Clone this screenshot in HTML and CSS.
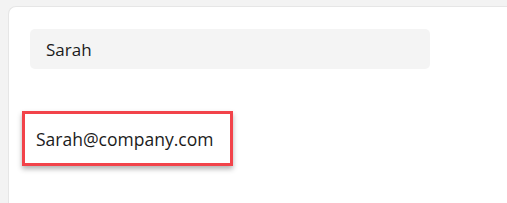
FILE: index.html
```html
<!DOCTYPE html>
<html>
<head>
    <meta charset="utf-8">
    <title>Contact form</title>
    <link rel="stylesheet" href="styles.css">
</head>
<body>
    <div class="panel">
        <div class="field-input">Sarah</div>
        <div class="highlight">
            <span class="email">Sarah@company.com</span>
        </div>
    </div>
</body>
</html>
```

FILE: styles.css
```css
body {
    margin: 0;
    background: #f3f3f3;
    font-family: "Open Sans", "Noto Sans", sans-serif;
    color: #1b1b1b;
    overflow: hidden;
    height: 203px;
}
.panel {
    margin: 6px 0 0 8px;
    background: #ffffff;
    border: 1px solid #e6e6e6;
    border-right: none;
    border-bottom: none;
    border-top-left-radius: 8px;
    padding: 22px 0 0 21px;
    height: 174px;
}
.field-input {
    width: 384px;
    height: 40px;
    padding-left: 16px;
    background: #f4f4f4;
    border-radius: 5px;
    display: flex;
    align-items: center;
    font-size: 17px;
}
.highlight {
    display: flex;
    align-items: center;
    margin: 42px 0 0 -8px;
    width: 194px;
    height: 49px;
    padding-left: 11px;
    border: 3px solid #f2434a;
    box-shadow: 0 3px 5px rgba(0,0,0,0.3);
    font-size: 17.5px;
}
```
